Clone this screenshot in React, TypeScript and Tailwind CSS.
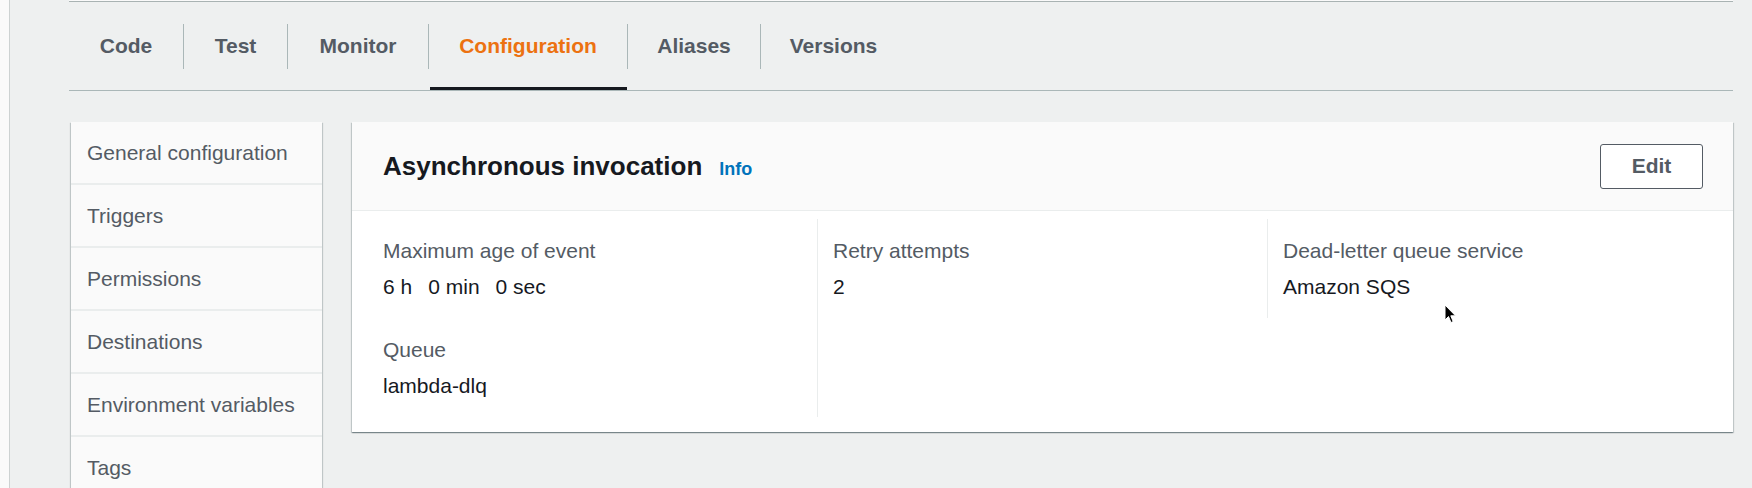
const tabs = [
  { label: 'Code', width: 'w-[114px]' },
  { label: 'Test', width: 'w-[103px]' },
  { label: 'Monitor', width: 'w-[140px]' },
  { label: 'Configuration', width: 'w-[198px]', active: true },
  { label: 'Aliases', width: 'w-[132px]' },
  { label: 'Versions', width: 'w-[145px]' },
]

const sideItems = [
  'General configuration',
  'Triggers',
  'Permissions',
  'Destinations',
  'Environment variables',
  'Tags',
]

const cardShadow =
  'shadow-[0_1px_1px_0_rgba(0,28,36,0.3),1px_1px_1px_0_rgba(0,28,36,0.15),-1px_1px_1px_0_rgba(0,28,36,0.15)]'

function Field({ label, children, className = '' }: { label: string; children: React.ReactNode; className?: string }) {
  return (
    <div className={className}>
      <div className="text-[21px] leading-[28px] text-[#545b64]">{label}</div>
      <div className="mt-[8px] text-[21px] leading-[28px] text-[#16191f]">{children}</div>
    </div>
  )
}

export default function App() {
  return (
    <div className="relative flex h-[488px] w-[1752px] items-start overflow-hidden bg-[#eef0f0] font-['Liberation_Sans',Arial,sans-serif]">
      {/* left page edge */}
      <div className="h-full w-[10px] shrink-0 border-r border-[#cdd2d2] bg-[#fafafa]" />

      <div className="ml-[59px] w-[1664px] shrink-0">
        {/* bottom edge of card above */}
        <div className="h-[2px] border-b border-[#a9b3b3] bg-[#fafafa]" />

        {/* Tabs */}
        <div className="flex h-[89px] items-center border-b border-[#aab7b8]">
          {tabs.map((t, i) => (
            <div key={t.label} className="flex h-full items-center">
              {i > 0 && <div className="h-[45px] w-px bg-[#aab7b8]" />}
              <div className={`relative flex h-full items-center justify-center ${t.width}`}>
                <span
                  className={`text-[21px] font-bold leading-[28px] ${t.active ? 'text-[#ec7211]' : 'text-[#545b64]'}`}
                >
                  {t.label}
                </span>
                {t.active && <span className="absolute bottom-0 left-[1px] right-0 h-[3px] bg-[#16191f]" />}
              </div>
            </div>
          ))}
        </div>

        <div className="mt-[31px] flex items-start">
          {/* Sidebar */}
          <div className={`ml-[2px] w-[251px] shrink-0 bg-[#fafafa] ${cardShadow}`}>
            {sideItems.map((item) => (
              <div
                key={item}
                className="flex h-[63px] items-center border-b-2 border-[#eaeded] pl-[16px] text-[21px] text-[#545b64]"
              >
                {item}
              </div>
            ))}
          </div>

          {/* Asynchronous invocation panel */}
          <div className={`ml-[30px] flex-1 bg-white ${cardShadow}`}>
            <div className="flex h-[89px] items-center justify-between border-b border-[#eaeded] bg-[#fafafa] pl-[31px] pr-[30px]">
              <div className="flex items-baseline gap-[17px]">
                <h2 className="text-[26px] font-bold leading-[32px] text-[#16191f]">Asynchronous invocation</h2>
                <a href="#" className="text-[18px] font-bold text-[#0073bb]">
                  Info
                </a>
              </div>
              <button className="h-[45px] w-[103px] rounded-[3px] border border-[#545b64] bg-white text-[21px] font-bold text-[#545b64]">
                Edit
              </button>
            </div>

            <div className="grid grid-cols-[434px_450px_1fr] px-[31px] pb-[15px] pt-[8px]">
              <div className="pb-[17px] pt-[18px]">
                <Field label="Maximum age of event">
                  <span className="flex gap-[16px]">
                    <span>6 h</span>
                    <span>0 min</span>
                    <span>0 sec</span>
                  </span>
                </Field>
                <Field label="Queue" className="mt-[35px]">
                  lambda-dlq
                </Field>
              </div>
              <div className="border-l border-[#eaeded] pb-[17px] pl-[15px] pt-[18px]">
                <Field label="Retry attempts">2</Field>
              </div>
              <div className="self-start border-l border-[#eaeded] pb-[17px] pl-[15px] pt-[18px]">
                <Field label="Dead-letter queue service">Amazon SQS</Field>
              </div>
            </div>
          </div>
        </div>
      </div>

      {/* mouse pointer */}
      <svg className="absolute left-[1444px] top-[304px]" width="13" height="20" viewBox="0 0 13 20">
        <path d="M1 1 L1 16 L4.5 12.5 L7 18.5 L9.2 17.6 L6.8 11.8 L11.5 11.8 Z" fill="#000" stroke="#fff" strokeWidth="1" />
      </svg>
    </div>
  )
}
